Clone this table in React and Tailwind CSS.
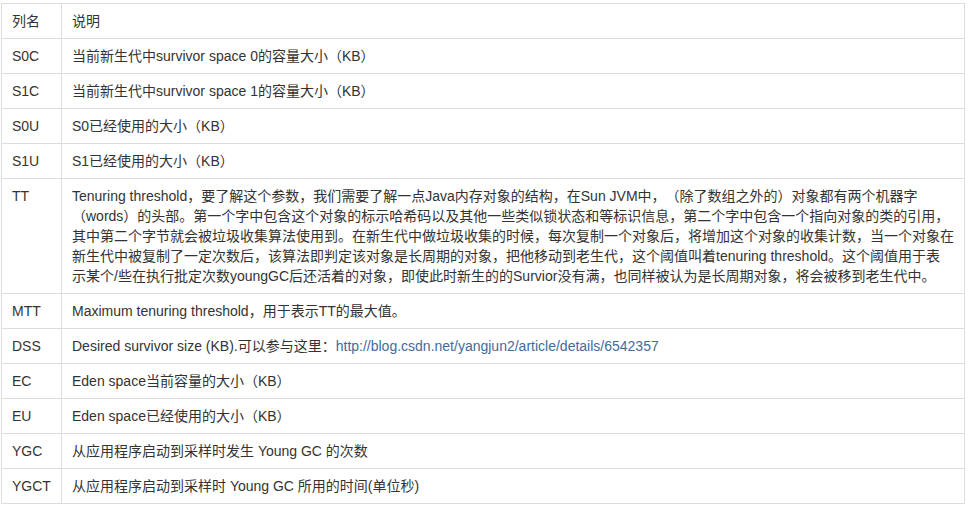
import React from "react";

const rows = [
  ["列名", "说明"],
  ["S0C", "当前新生代中survivor space 0的容量大小（KB）"],
  ["S1C", "当前新生代中survivor space 1的容量大小（KB）"],
  ["S0U", "S0已经使用的大小（KB）"],
  ["S1U", "S1已经使用的大小（KB）"],
  [
    "TT",
    [
      "Tenuring threshold，要了解这个参数，我们需要了解一点Java内存对象的结构，在Sun JVM中，（除了数组之外的）对象都有两个机器字",
      "（words）的头部。第一个字中包含这个对象的标示哈希码以及其他一些类似锁状态和等标识信息，第二个字中包含一个指向对象的类的引用，",
      "其中第二个字节就会被垃圾收集算法使用到。在新生代中做垃圾收集的时候，每次复制一个对象后，将增加这个对象的收集计数，当一个对象在",
      "新生代中被复制了一定次数后，该算法即判定该对象是长周期的对象，把他移动到老生代，这个阈值叫着tenuring threshold。这个阈值用于表",
      "示某个/些在执行批定次数youngGC后还活着的对象，即使此时新生的的Survior没有满，也同样被认为是长周期对象，将会被移到老生代中。",
    ],
  ],
  ["MTT", "Maximum tenuring threshold，用于表示TT的最大值。"],
  ["DSS", "link"],
  ["EC", "Eden space当前容量的大小（KB）"],
  ["EU", "Eden space已经使用的大小（KB）"],
  ["YGC", "从应用程序启动到采样时发生 Young GC 的次数"],
  ["YGCT", "从应用程序启动到采样时 Young GC 所用的时间(单位秒)"],
];

export default function App() {
  return (
    <div className="bg-white w-[968px] h-[508px] pt-[3px] pl-[1px] text-[14px] text-[#333333] font-['Liberation_Sans','Noto_Sans_CJK_SC',sans-serif] [text-spacing-trim:space-all]">
      <div className="w-[964px] border-t border-l border-r border-[#dddddd]">
        {rows.map(([name, desc], i) => (
          <div key={i} className="flex border-b border-[#dddddd]">
            <div className="w-[60px] shrink-0 border-r border-[#dddddd] px-[10px] py-[7px] leading-[20px] whitespace-nowrap">
              {name}
            </div>
            <div className="flex-1 px-[10px] py-[7px] leading-[20px] whitespace-nowrap">
              {Array.isArray(desc) ? (
                desc.map((l, j) => <div key={j}>{l}</div>)
              ) : desc === "link" ? (
                <span>
                  Desired survivor size (KB).可以参与这里：
                  <a className="text-[#3f6b9e]" href="#">
                    http://blog.csdn.net/yangjun2/article/details/6542357
                  </a>
                </span>
              ) : (
                desc
              )}
            </div>
          </div>
        ))}
      </div>
    </div>
  );
}
